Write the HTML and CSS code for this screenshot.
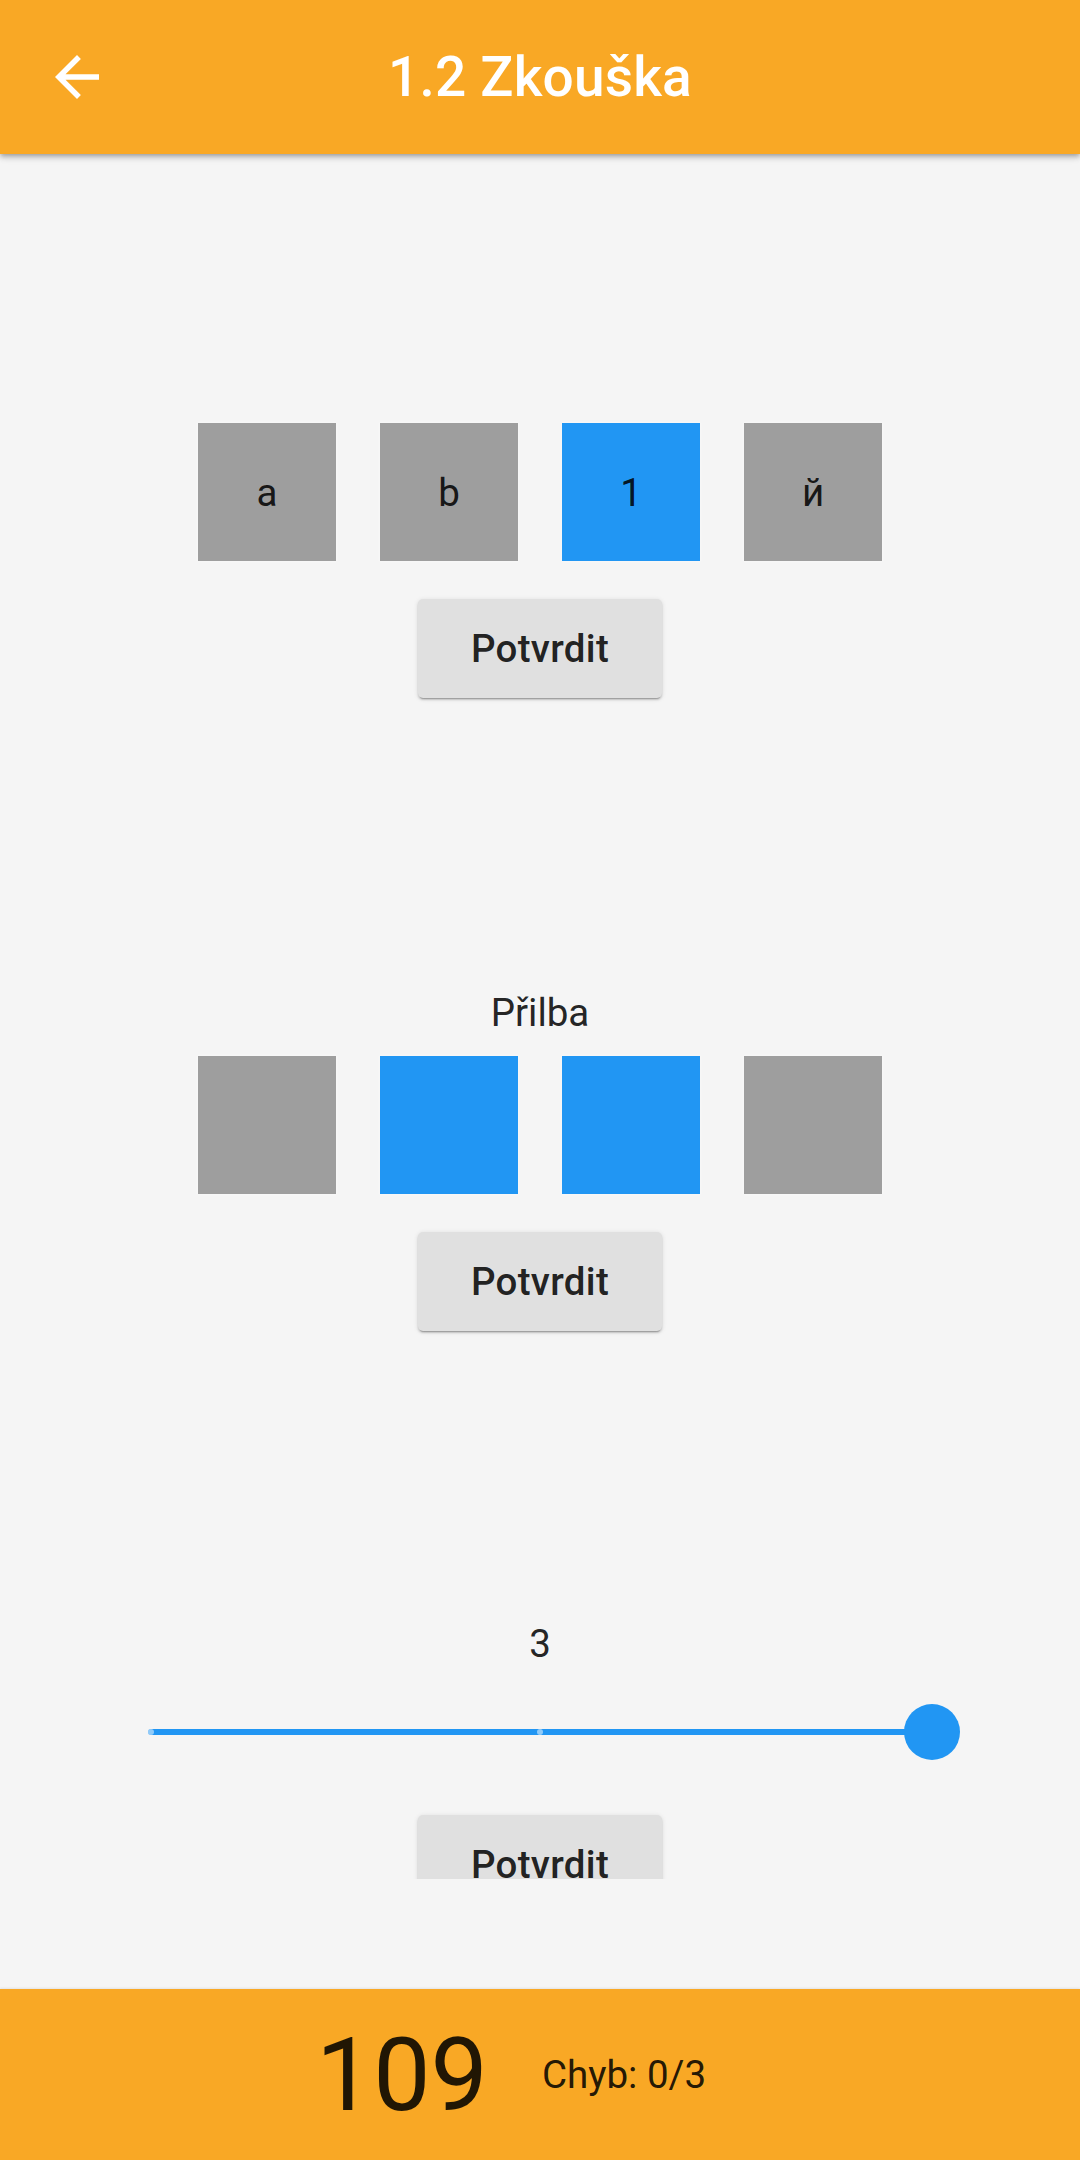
FILE: index.html
```html
<!DOCTYPE html>
<html lang="cs">
<head>
<meta charset="utf-8">
<title>1.2 Zkouška</title>
<link rel="stylesheet" href="styles.css">
</head>
<body>
<header class="appbar">
  <div class="leading">
    <svg class="back-icon" viewBox="0 0 24 24" width="66" height="66" aria-hidden="true">
      <path fill="#ffffff" d="M20 11H7.83l5.59-5.59L12 4l-8 8 8 8 1.41-1.41L7.83 13H20v-2z"/>
    </svg>
  </div>
  <h1 class="title">1.2 Zkouška</h1>
  <div class="trailing"></div>
</header>

<main class="scroll">
  <section class="question q-first">
    <div class="tiles">
      <div class="tile">a</div>
      <div class="tile">b</div>
      <div class="tile selected">1</div>
      <div class="tile">й</div>
    </div>
    <button class="confirm">Potvrdit</button>
  </section>

  <section class="question q-second">
    <div class="label">Přilba</div>
    <div class="tiles tiles-after-label">
      <div class="tile"></div>
      <div class="tile selected"></div>
      <div class="tile selected"></div>
      <div class="tile"></div>
    </div>
    <button class="confirm">Potvrdit</button>
  </section>

  <section class="question q-third">
    <div class="label">3</div>
    <div class="slider">
      <div class="track">
        <span class="tick tick-start"></span>
        <span class="tick tick-mid"></span>
        <span class="thumb"></span>
      </div>
    </div>
    <button class="confirm confirm-last">Potvrdit</button>
  </section>
</main>

<footer class="bottombar">
  <span class="score">109</span>
  <span class="errors">Chyb: 0/3</span>
</footer>
</body>
</html>
```

FILE: styles.css
```css
* {
  box-sizing: border-box;
}

html, body {
  margin: 0;
  padding: 0;
}

body {
  width: 1080px;
  height: 2160px;
  background: #f5f5f5;
  font-family: Roboto, "Noto Sans", "Liberation Sans", sans-serif;
  color: rgba(0, 0, 0, 0.87);
  overflow: hidden;
}

/* ---------- App bar ---------- */
.appbar {
  position: relative;
  z-index: 2;
  height: 154px;
  background: #f9a825;
  display: grid;
  grid-template-columns: 154px 1fr 154px;
  align-items: center;
  box-shadow: 0 2px 4px -1px rgba(0, 0, 0, 0.2),
              0 4px 5px 0 rgba(0, 0, 0, 0.14),
              0 1px 10px 0 rgba(0, 0, 0, 0.12);
}

.leading {
  display: flex;
  align-items: center;
  justify-content: center;
  height: 154px;
}

.back-icon {
  display: block;
}

.title {
  margin: 0;
  text-align: center;
  font-size: 55px;
  font-weight: 500;
  line-height: 64px;
  color: #ffffff;
  letter-spacing: 0.2px;
}

/* ---------- Scrollable content ---------- */
.scroll {
  height: 1725px;
  overflow: hidden;
  display: flex;
  flex-direction: column;
  align-items: center;
}

.question {
  display: flex;
  flex-direction: column;
  align-items: center;
  width: 100%;
}

.q-first {
  margin-top: 269px;
}

.q-second {
  margin-top: 292px;
}

.q-third {
  margin-top: 290px;
}

.label {
  font-size: 38.5px;
  line-height: 45px;
  height: 45px;
  color: rgba(0, 0, 0, 0.87);
}

.tiles {
  display: flex;
  gap: 44px;
}

.tiles-after-label {
  margin-top: 21px;
}

.tile {
  width: 138px;
  height: 138px;
  background: #9e9e9e;
  display: flex;
  align-items: center;
  justify-content: center;
  font-size: 38.5px;
  color: rgba(0, 0, 0, 0.87);
  box-shadow: 0 0 2px 1px rgba(255, 255, 255, 0.35);
}

.tile.selected {
  background: #2196f3;
}

.confirm {
  margin-top: 38px;
  min-width: 244px;
  height: 99px;
  padding: 0 44px;
  border: none;
  border-radius: 5px;
  background: #e0e0e0;
  font-family: Roboto, "Noto Sans", "Liberation Sans", sans-serif;
  font-size: 38.5px;
  font-weight: 500;
  color: rgba(0, 0, 0, 0.87);
  letter-spacing: 0.3px;
  box-shadow: 0 3px 1px -2px rgba(0, 0, 0, 0.2),
              0 2px 2px 0 rgba(0, 0, 0, 0.14),
              0 1px 5px 0 rgba(0, 0, 0, 0.12);
}

.confirm-last {
  margin-top: 50px;
}

/* ---------- Slider ---------- */
.slider {
  margin-top: 33px;
  width: 100%;
  height: 66px;
  display: flex;
  align-items: center;
  padding: 0 148px;
}

.track {
  position: relative;
  width: 100%;
  height: 6px;
  border-radius: 3px;
  background: #2196f3;
}

.tick {
  position: absolute;
  top: 0;
  width: 6px;
  height: 6px;
  border-radius: 50%;
  background: rgba(255, 255, 255, 0.5);
}

.tick-start {
  left: 0;
}

.tick-mid {
  left: calc(50% - 3px);
}

.thumb {
  position: absolute;
  right: -28px;
  top: -25px;
  width: 56px;
  height: 56px;
  border-radius: 50%;
  background: #2196f3;
}

/* ---------- Bottom bar ---------- */
.bottombar {
  margin-top: 110px;
  height: 171px;
  background: #f9a825;
  display: flex;
  align-items: center;
  justify-content: center;
  gap: 54px;
  padding-right: 58px;
  box-shadow: 0 -1px 2px rgba(0, 0, 0, 0.08);
}

.score {
  font-size: 102px;
  line-height: 120px;
  color: rgba(0, 0, 0, 0.87);
}

.errors {
  font-size: 38.5px;
  line-height: 45px;
  color: rgba(0, 0, 0, 0.87);
}
```
